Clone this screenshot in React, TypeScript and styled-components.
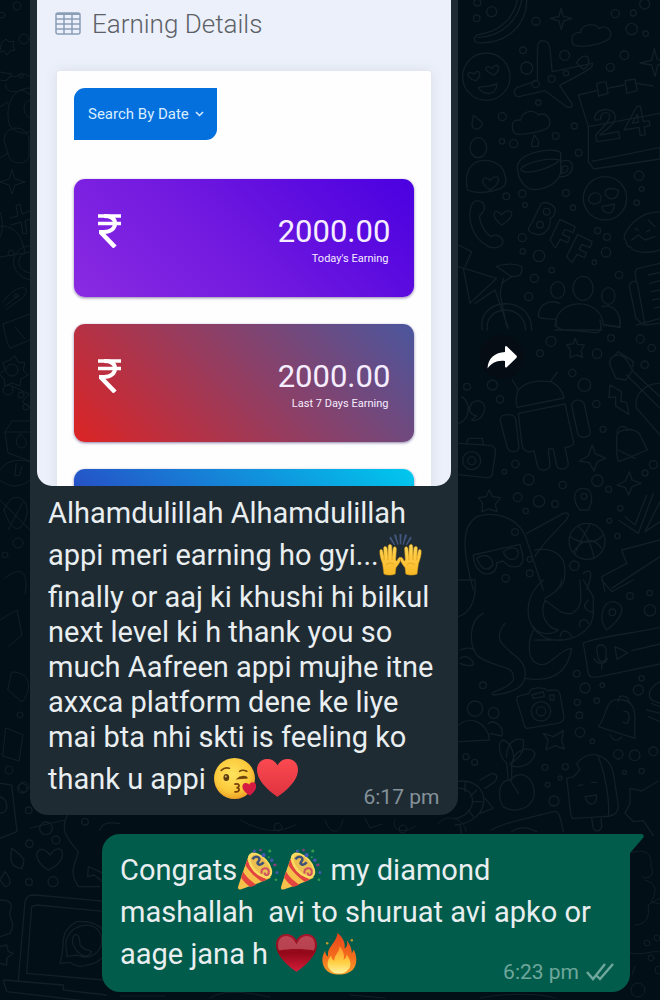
import React from "react";
import styled, { createGlobalStyle } from "styled-components";

const GlobalStyle = createGlobalStyle`
  * { box-sizing: border-box; }
  body {
    margin: 0;
    background: #020f16;
    font-family: Roboto, "Liberation Sans", sans-serif;
  }
`;

const Chat = styled.main`
  position: relative;
  min-height: 100vh;
  overflow: hidden;
  padding-bottom: 8px;
`;

const Backdrop = styled.svg`
  position: absolute;
  top: 0;
  left: 0;
  width: 100%;
  fill: none;
  stroke: #121f27;
  stroke-width: 1;
  stroke-linecap: round;
  stroke-linejoin: round;
`;

const Conversation = styled.div`
  position: relative;
  display: flex;
  flex-direction: column;
  gap: 19px;
  padding: 0 30px;
`;

const MessageRow = styled.div<{ $mine?: boolean }>`
  display: flex;
  align-items: flex-start;
  justify-content: ${(p) => (p.$mine ? "flex-end" : "flex-start")};
  gap: 22px;
`;

const Bubble = styled.article<{ $mine?: boolean }>`
  position: relative;
  display: flex;
  flex-direction: column;
  width: ${(p) => (p.$mine ? "88%" : "71.4%")};
  padding: ${(p) => (p.$mine ? "12px 18px 8px" : "0 7px 6px")};
  background: ${(p) => (p.$mine ? "#025c4b" : "#1f2b33")};
  border-radius: ${(p) => (p.$mine ? "18px 0 18px 18px" : "0 0 18px 18px")};
`;

const Tail = styled.svg`
  position: absolute;
  top: 0;
  left: 100%;
  width: 14px;
  height: 20px;
  fill: #025c4b;
`;

const MessageText = styled.p<{ $inset?: boolean }>`
  margin: 0;
  padding: ${(p) => (p.$inset ? "10px 8px 0 11px" : "0")};
  color: #e9eef0;
  font-size: 29px;
  line-height: 35px;
  white-space: pre-wrap;
`;

const EmojiSvg = styled.svg`
  width: 43px;
  height: 43px;
  margin: 2px 0 4px;
  vertical-align: -15px;
`;

const Meta = styled.span<{ $mine?: boolean }>`
  float: right;
  display: flex;
  align-items: center;
  gap: 7px;
  margin-top: 30px;
  margin-right: ${(p) => (p.$mine ? "-2px" : "4px")};
  color: ${(p) => (p.$mine ? "#6fa79c" : "#84929a")};
  font-size: 21px;
  line-height: 24px;
`;

const Ticks = styled.svg`
  width: 28px;
  height: 18px;
  fill: none;
  stroke: currentColor;
  stroke-width: 2.4;
`;

const ForwardButton = styled.button`
  display: flex;
  align-items: center;
  justify-content: center;
  width: 44px;
  height: 44px;
  margin-top: 335px;
  padding: 0;
  border: 0;
  border-radius: 50%;
  background: #060c14;
  svg { width: 30px; height: 23px; fill: #fff; }
`;

const Attachment = styled.section`
  height: 486px;
  overflow: hidden;
  padding: 0 20px;
  background: #ebf0fa;
  border-radius: 0 0 15px 15px;
`;

const AttachmentHeader = styled.h2`
  display: flex;
  align-items: center;
  gap: 11px;
  height: 71px;
  margin: 0;
  padding: 0 0 24px;
  color: #5d6167;
  font-size: 26px;
  font-weight: 300;
  line-height: 30px;
`;

const GridIcon = styled.svg`
  width: 26px;
  height: 23px;
  margin-left: -2px;
  fill: none;
  stroke: #8a9db9;
`;

const Panel = styled.div`
  display: flex;
  flex-direction: column;
  align-items: flex-start;
  padding: 17px;
  background: #fefeff;
  border-radius: 3px;
  box-shadow: 0 0 12px #d9dbe8;
`;

const SearchButton = styled.button`
  display: flex;
  align-items: center;
  gap: 6px;
  height: 52px;
  margin-bottom: 39px;
  padding: 0 13px 0 14px;
  border: 0;
  border-radius: 11px 0;
  background: #0470de;
  color: #d9edff;
  font-family: inherit;
  font-size: 15px;
  line-height: 20px;
  svg { width: 9px; height: 6px; fill: none; stroke: currentColor; stroke-width: 1.5; }
`;

const EarningCard = styled.div<{ $fill: string }>`
  display: flex;
  align-items: flex-start;
  justify-content: space-between;
  align-self: stretch;
  height: 118px;
  margin-bottom: 27px;
  padding: 35px 24px 0;
  border-radius: 11px;
  background: ${(p) => p.$fill};
  box-shadow: 0 1px 3px #8c80a8;
  color: #f6edff;
`;

const Rupee = styled.svg`
  width: 23px;
  height: 34px;
  fill: none;
  stroke: #fff;
  stroke-width: 4;
`;

const Figures = styled.div`
  display: flex;
  flex-direction: column;
  align-items: flex-end;
`;

const Amount = styled.strong`
  font-size: 31px;
  font-weight: 400;
  line-height: 36px;
`;

const AmountLabel = styled.span`
  padding-right: 2px;
  font-size: 11px;
  line-height: 18px;
`;

type Card = { amount: string; label: string; fill: string };

const cards: Card[] = [
  { amount: "2000.00", label: "Today's Earning", fill: "linear-gradient(45deg, #8a2be2, #7119df 45%, #4a00e0)" },
  { amount: "2000.00", label: "Last 7 Days Earning", fill: "linear-gradient(45deg, #dc2424, #4a569d)" },
  { amount: "", label: "", fill: "linear-gradient(45deg, #2f2cb8, #2456c8 25%, #00c8ee)" },
];

type EmojiProps = { label: string; children: React.ReactNode };
const Emoji = ({ label, children }: EmojiProps) => (
  <EmojiSvg viewBox="0 0 42 42" role="img" aria-label={label}>{children}</EmojiSvg>
);

const heartPath = "M21 39C14 34 1 24 1 12.500C1 6 5.500 2 11 2c4.500 0 8 2.500 10 6C23 4.500 26.500 2 31 2c5.500 0 10 4 10 10.500C41 24 28 34 21 39Z";

const Hand = () => (
  <g>
    <path d="M4.500 36 3.500 29C2 25 .500 20 .800 16.500c.200-2 2.400-2 2.800 0L5 22 4.500 14c0-2.500 3-2.500 3.400 0l.900 7.500.200-9.500c.200-2.500 3.200-2.500 3.500 0l.300 9.500 1-7.500c.500-2.300 3.200-2 3.200.500l-.700 10c0 2 .700 2.300 1.500 1.200l1.300-2.200c1-1.500 2.700-.700 2.300 1C20.500 28.500 18 31 16.500 33l-.700 6c-3 1.500-8 1.500-11 0Z" fill="url(#handFill)" stroke="#d99a16" strokeWidth=".5" />
    <path d="M5 22.500v3M8.800 21.500v4M12.800 21.500v4M7 30c3-2 6-2 8 0" stroke="#e09b18" strokeWidth=".8" fill="none" />
  </g>
);

const RaisedHands = () => (
  <Emoji label="raising hands">
    <g transform="translate(0 1)"><Hand /></g>
    <g transform="translate(42 1) scale(-1 1)"><Hand /></g>
    <path d="M20 1h2l-.300 10h-1.400ZM14.500 2l2-.7 2.600 10-1 .3ZM27.500 2l-2-.7-2.600 10 1 .3ZM10 5 11.500 3.500l4.300 8-.8.600ZM32 5 30.500 3.500l-4.300 8 .8.600Z" fill="#43587f" />
  </Emoji>
);

const KissFace = () => (
  <Emoji label="face blowing a kiss">
    <circle cx="21" cy="21" r="20" fill="url(#faceFill)" />
    <ellipse cx="13" cy="20" rx="2.800" ry="3.500" fill="#5c3b0c" />
    <circle cx="12.500" cy="19" r="1" fill="#d7b875" />
    <path d="M8 13c2-2 5-3 8-2M26 14c2-1.500 5-1 7 0M24.500 21c2-2 6-2.500 9-.5-3-.5-6 0-9 .5Z" fill="none" stroke="#71450c" strokeWidth="1.600" strokeLinecap="round" />
    <path d="M21.500 26.500c5-1 5 3 1.500 3.500 4 .5 3 4.500-1.500 4" fill="none" stroke="#774008" strokeWidth="1.700" strokeLinecap="round" />
    <g transform="translate(28 25) rotate(-5) scale(.34)"><path d={heartPath} fill="#d61b42" /></g>
  </Emoji>
);

const Heart = ({ dark }: { dark?: boolean }) => (
  <Emoji label="red heart">
    <path d={heartPath} fill={dark ? "url(#darkHeart)" : "url(#redHeart)"} />
    {dark && <path d="M3 13C3 7 7 4 11 4c5 0 8 4 10 8 2-4 5-8 10-8 4 0 8 3 8 9 0 2 0 3-1 5-10-2-24-2-34 0-1-2-1-3-1-5Z" fill="#c95f6b" opacity=".65" />}
  </Emoji>
);

const PartyPopper = () => (
  <Emoji label="party popper">
    <path d="M12 6C7 19 4 29 1 38c-.300 2 .700 3 2.500 2.500C13 37 23 34 33 29Z" fill="#f6c14b" />
    <path d="M10 11 8.200 17c5 7 10 12 16 16l5-2C22 27 14 19 10 11ZM6 23l-2 6c3 4 6 7 9 9l6-2C13 32 8 27 6 23Z" fill="#e2443f" />
    <ellipse cx="22.500" cy="17" rx="15" ry="8.500" transform="rotate(48 22.500 17)" fill="#fbdc63" />
    <ellipse cx="23" cy="17" rx="12.500" ry="6.500" transform="rotate(48 23 17)" fill="#ecc050" />
    <path d="M15 11c4-5 9-1 6 2s2 5 5 1" fill="none" stroke="#405279" strokeWidth="2.500" />
    <path d="M24 25c-1-6 7-7 7-2s-4 4-4 1" fill="none" stroke="#cf5362" strokeWidth="2" />
    <g fill="#4558ae"><circle cx="17" cy="3" r="1.500" /><circle cx="26" cy="7" r="2" /><circle cx="34" cy="12" r="1.700" /><circle cx="39" cy="24" r="1.500" /></g>
    <g fill="#329d50"><circle cx="32" cy="3" r="1.500" /><circle cx="38" cy="31" r="1.300" /><circle cx="31" cy="9" r="1" /></g>
    <g fill="#81417f"><circle cx="23" cy="2" r="1.300" /><path d="m35 16 3-1 1 2-3 1Z" /></g>
  </Emoji>
);

const Fire = () => (
  <Emoji label="fire">
    <path d="M12 40C4 36 2 26 7 18c0 3 1 5 3 6C8 15 18 11 19 1c5 4 8 9 7 15 3-2 3-5 2-8 4 5 5 9 5 13l2-4c5 11 2 20-6 23-5 2-12 2-17 0Z" fill="url(#fireOuter)" />
    <path d="M14 39C7 34 9 27 13 23c0 3 1 4 3 5 0-6 5-8 5-14 4 4 5 9 4 13 2-1 3-3 3-5 6 8 4 14-1 17-4 2-9 2-13 0Z" fill="url(#fireInner)" />
    <circle cx="9" cy="11" r="1.200" fill="#c39a2b" /><circle cx="33" cy="8" r="1.200" fill="#c39a2b" />
  </Emoji>
);

const GradientDefs = () => (
  <defs>
    <linearGradient id="handFill" x1="0" y1="0" x2="0" y2="1"><stop offset="0" stopColor="#ffd75a" /><stop offset="1" stopColor="#f8b824" /></linearGradient>
    <radialGradient id="faceFill" cx=".45" cy=".4" r=".6"><stop offset="0" stopColor="#ffe45f" /><stop offset=".7" stopColor="#fbc93c" /><stop offset="1" stopColor="#efa126" /></radialGradient>
    <linearGradient id="redHeart" x1="0" y1="0" x2="0" y2="1"><stop offset="0" stopColor="#fb4a50" /><stop offset="1" stopColor="#df3340" /></linearGradient>
    <linearGradient id="darkHeart" x1="0" y1="0" x2="0" y2="1"><stop offset="0" stopColor="#a3192c" /><stop offset=".5" stopColor="#930819" /><stop offset="1" stopColor="#d51d3a" /></linearGradient>
    <linearGradient id="fireOuter" x1="0" y1="0" x2="0" y2="1"><stop offset="0" stopColor="#e8431c" /><stop offset=".6" stopColor="#f4701d" /><stop offset="1" stopColor="#f9a32b" /></linearGradient>
    <linearGradient id="fireInner" x1="0" y1="0" x2="0" y2="1"><stop offset="0" stopColor="#fb952a" /><stop offset=".6" stopColor="#ffd044" /><stop offset="1" stopColor="#fff3a0" /></linearGradient>
  </defs>
);

type Dot = [number, number, number];
const Dots = ({ items }: { items: Dot[] }) => (
  <>{items.map(([x, y, r]) => <circle key={`${x}-${y}`} cx={x} cy={y} r={r} />)}</>
);

const Doodles = () => (
  <Backdrop viewBox="0 0 660 1000" aria-hidden="true">
    <GradientDefs />
    <g transform="translate(455 0) scale(.33333)" strokeWidth="4">
      <path d="M215 0C215 70 160 135 65 128c-12-5-8-20 5-24C135 95 175 55 187 0M200 0C190 60 140 110 70 112M318 25l7 24 26 6-25 8-7 25-7-25-26-8 26-6ZM352 125c-5-22 12-30 25-27 0-25 45-33 55-12 20-14 40 5 34 22 0 20-80 38-105 28-8-2-10-6-9-11Z" />
      <path d="M250 130c5-12 28-10 32 5 7 23 5 56 10 80l120-25c5 10-6 18-98 66l36 54c4 12-4 15-15 10l-65-48-78 18c-18-2-18-20-5-28l60-20c2-40-3-85 3-112ZM365 190c5-15 20-25 32-20 10 15 2 32-12 38Z" />
      <circle cx="94" cy="230" r="71" /><path d="M62 243c-40-15-20-35-4-20 8-18 30-5 4 20ZM118 225c-40-15-25-35-6-20 12-20 32-5 6 20ZM70 263c20-5 40-3 55-12 2 35-40 38-55 12Z" />
      <path d="M598 145l8 32 24 10-22 8-8 35-10-35-35-6 35-8ZM370 285l55-13M457 265l50-10M545 250l50 8M370 285l30 95v105l16 22 199-30v-35l-204 42M400 380l215-40M425 250l28-5 6 35-28 8ZM510 242l30-5 6 35-30 8Z" />
      <path d="M420 360c-10-30 48-45 60-15 8 25-30 45-45 60l55-10 5 20-70 10-3-20c20-20 45-45 42-58-4-16-30-10-27 12ZM545 320l-38 70 45-8 4 25 15-3-4-23 18-4-3-15-17 3-9-47ZM547 342l3 25-18 2Z" />
      <path d="M55 345c0 15-12 35 5 42 20 0 28-18 15-25ZM172 380c0-22 15-20 25-20 5-32 45-30 52-15 24-10 40 10 34 30 0 18-65 28-93 28-12 0-18-10-18-23ZM230 440c-3-10 5-25 8-35 8 10 18 20 10 35Z" />
      <ellipse cx="70" cy="443" rx="25" ry="30" /><path d="M37 570c-20-110 80-100 105-65 10 20 20 50-5 60-50 18-80 14-100 5ZM105 570c-40-25-15-50 0-28 15-25 50-5 0 28Z" />
      <path d="M187 500c5-45 110-60 130-42v60c-10 45-80 60-100 45-20-15-30-38-30-63ZM317 485c50-20 45 50-3 45M198 510c20 20 110-15 115-30-40-10-120 15-115 30ZM322 500c25-10 22 20-2 20Z" />
      <circle cx="450" cy="595" r="65" /><path d="M400 600c5-30 40-25 38-5 0 20-30 22-38 5ZM450 580c0-20 30-15 40-10 0 30-30 35-40 10ZM440 620l38-8c0 35-30 35-38 8Z" />
      <path d="M50 615c10-20 40-15 38 10 0 12-10 15-15 25 5 30 20 50 35 60 15-10 35 0 36 15-5 25-40 20-50 10-40-20-60-80-44-120ZM140 675c-38-30-20-55 0-30 15-25 60-10 0 30Z" />
      <path d="M230 670l28-58c15-12 48 5 42 25-4 15-15 18-15 18 5 30-20 55-40 48-20-5-35-10-15-33ZM285 720l30-62 45 22-5 18-25-10-8 15 22 10-6 15-22-10-15 26ZM335 770l33-67 43 22-6 18-25-10-8 15 22 10-6 15-22-10-15 25Z" />
      <circle cx="275" cy="635" r="10" /><circle cx="255" cy="674" r="10" />
      <path d="M615 635c-70 0-108 60-108 80 10 5 5 30 20 25 5 20 60 20 88 10M530 720l20-15 20 15 30-10M580 660l20 20M540 685l10 5M575 695l10-5" />
      <path d="M10 800l115 35-80 75-20-105M10 735l40 20-20 45M125 800c20-10 60-10 75 0 5 30-15 30-30 30l-45-30ZM145 835l-10 45 20 100M60 910l60-40 40 115M170 830l-30 20" />
      <path d="M82 990c-20-100 150-110 148 0M97 990c-10-75 110-85 115 0M300 980c0-90 140-90 145-5M300 990h140" /><ellipse cx="308" cy="870" rx="21" ry="25" /><ellipse cx="384" cy="865" rx="30" ry="36" /><ellipse cx="460" cy="888" rx="20" ry="25" />
      <path d="M315 910c-40-15-65 10-65 40 15 10 35 5 50 8M440 920c30-10 60 15 55 60l-50-5M615 790l-65 15c-15 5-10 20 0 60l20 110 45-5M545 845c-20-5-25 10-20 25l18 85 22 20M580 825l35-8M584 850l31-8M588 875l27-5M593 900l22-5M598 925l17-5" />
      <Dots items={[[67,8,10],[110,35,15],[65,55,10],[243,64,12],[481,41,12],[535,39,9],[530,87,17],[572,101,8],[569,12,15],[204,151,10],[215,204,18],[329,166,15],[242,252,11],[290,237,10],[333,220,8],[466,202,12],[508,166,13],[250,308,8],[142,350,12],[358,378,9],[302,408,10],[176,431,12],[141,424,8],[371,458,10],[154,589,10],[202,581,11],[333,579,10],[210,615,7],[354,623,8],[552,527,14],[560,567,7],[545,608,8],[202,713,12],[203,754,8],[252,768,17],[428,692,9],[456,711,10],[453,757,14],[492,825,11],[418,787,7],[238,835,12],[290,811,8],[221,890,12]]} />
    </g>
    <g transform="translate(455 320) scale(.33333)" strokeWidth="4">
      <path d="M305 0c-5 15 0 25 15 28l100 10c20 0 20-15 15-38M450 15l45 8V0M545 15l70-20M360 55l8 18 20 2-10 18 5 18-20-6-18 8 2-22-12-16 20-4Z" />
      <path d="M187 262l140-28c-5-25-20-40-40-50l20-28M172 180l18 30c-8 20-10 35-3 52M190 210c20-25 60-30 95-25M190 280l140-28 25 110c5 12-8 20-25 20l10 50c-3 18-28 20-35 5l-10-50h-15l5 50c-8 20-35 15-38 0l-10-45c-25 10-35-5-37-25ZM135 300c0-20 42-22 47-2l10 85c-5 18-30 15-35 0ZM350 255c5-18 30-20 38-2l18 85c-5 18-30 18-38 3Z" />
      <path d="M20 230c30 20 25 70-10 80M50 250c25-20 50 5 35 30-5 15-20 25-35 20l15-12c-25-5-25-25-15-38ZM13 370l90 6c15 0 20 10 18 25l-10 65c-3 8-12 8-22 6l-80-8M35 370l5-15h42l3 20" /><circle cx="50" cy="422" r="27" /><circle cx="50" cy="422" r="12" />
      <path d="M412 375l8 25 32 15-25 10-10 28-14-25-30-5 26-15ZM523 455l8 25 27 10-27 10-10 25-10-22-25-8 25-12ZM465 195l35 20-3 28 18 5 7 35-40-25v-28l-20 3ZM485 350c-2-25 60-30 70-5l22 45-85 35c-8-3-7-40-7-75ZM487 342c-5-25 30-30 30-10M490 390l50 25" />
      <path d="M465 135c-5-30 30-40 50-15l18 30-20 30-30-5ZM480 105l10-10 45 30-2 15M515 165l100 100M530 150l85 80M615 190c-50 0-80 40-70 75l70 80M103 510l10 20 23 3-15 20 5 22-25-8-20 8 2-25-13-17 23-3ZM375 570c-25-30-20-65 10-65s30 40 15 65Z" />
      <path d="M55 810C20 680 20 620 65 590c60-20 120 5 145 55l55 165M55 705l140-32 5 20c20 60-40 55-55 30l-20 5c5 45-60 50-70-15ZM65 715c30-20 50 0 48 20-15 20-35 15-48-20ZM145 695c25-20 45-10 45 5-5 25-35 25-45-5ZM215 640l110-60c15-5 20 3 10 18l-65 70-30 40M240 690c60-10 90 20 90 60s-10 50-25 60" />
      <circle cx="396" cy="664" r="54" /><path d="M370 620c25 20 40 60 48 95M345 650c35 25 80 20 100-5M355 695c30-40 60-45 85-10M405 612c-15 30-40 70-45 90M490 600l60 40 45-120M510 590l30 25 35-90M615 545l-45 90 45-30M500 690l115-30M500 690l15 40-75 40 10 45M470 805l145-95M385 760c30-20 25 10 10 50" />
      <Dots items={[[288,64,15],[255,100,10],[426,101,14],[468,54,10],[556,57,12],[590,84,11],[569,134,11],[352,159,11],[388,195,19],[424,252,11],[135,238,11],[36,200,10],[112,195,15],[444,328,9],[181,432,11],[148,455,7],[221,479,16],[323,495,11],[427,482,17],[461,508,9],[188,532,13],[252,544,17],[300,552,10],[212,573,8],[387,529,9],[570,459,9],[595,434,12],[496,565,8],[463,602,7],[487,648,8],[180,636,10],[358,737,14],[152,775,11],[224,718,8],[224,760,10]]} />
    </g>
    <g transform="translate(455 580) scale(.33333)" strokeWidth="4">
      <path d="M10 0h50c5 60-15 100-50 110M85 100C40 120 40 200 70 230c60 40 110 20 105 70-15 30-80 35-60 45 50-5 95-20 95-60 5-45-40-60-60-85-25-20-20-45 0-70M15 210c25-10 35-5 45 0M15 235c10-10 40-5 40 20-20 5-30 0-40-5" />
      <path d="M265 0c-60 50-65 140 10 175 70 20 140-20 140-80V50L385 0M270 60c40 30 50 45 80 40 40-20 25-60 25-100M270 60c-20 50 10 85 40 90-25 20-65 10-75-10M235 150c-20 40-15 90 10 100 40 20 60-40 105-45-15 90-80 100-140 90M320 0c-5 30-25 40-50 55M400 60c-30 25 10 40 15 35M375 140c-10-20 20-30 25-10M315 170c5-25 25-20 35 0M240 180l80 0" />
      <path d="M385 190c15-15 150-30 230-48M385 190l15 90c3 15 15 12 35 10l180-38M425 210c0-20 25-20 28 0v25c-5 15-20 12-23 0ZM417 235c10 20 35 20 40 0M440 250v18M480 200l38 18-32 20ZM530 212l85-20M455 150c-25-30-15-85 20-85 45 10 25 50-20 85ZM440 0l30 35 65-35" />
      <circle cx="472" cy="97" r="10" />
      <path d="M187 350l35-10c0-20 45-20 55-8 30-5 35 0 38 10l12 70c0 12-10 15-20 18l-90 15c-10 0-10-10-12-20l-20-65ZM230 345l35-10 3 15-33 5ZM285 345h12v15h-12Z" /><circle cx="258" cy="394" r="29" /><circle cx="258" cy="394" r="14" />
      <path d="M430 440c35-45 15-90 75-80 50 10 30 70 35 115ZM430 440l110 35M490 365c-5-25 32-20 32 0M465 465c15 25 25 15 35 7M507 395c15-5 20 15 10 35l-12-3M265 460l30 10 30-18-5 30 8 25-28-10-27 13 6-30Z" />
      <circle cx="60" cy="386" r="23" /><circle cx="116" cy="399" r="16" /><path d="M12 435c30-30 85-10 92 45l-92 5M100 430c25-15 50 20 40 38l-35-8M155 550c-30-30-25-70-10-70 15 5 35 30 30 60M155 530c0-40 25-60 50-50 5 40-20 60-40 70M170 555c5-50 60-60 70-35-5 30-45 50-75 35M155 550l5 50M170 550v50M165 600c-40 0-35 60-20 80 30 20 80 10 92-30 5-60-40-85-72-50l25 40" />
      <path d="M355 590l20-20-10-20c45-50 100-20 110 30l15 95c0 30-20 35-50 35l-85 5c-10 0-8-25-20-120ZM430 530c20 50 35 130 30 180M410 715l5 30c5 12 20 10 25-5l-2-25M370 617l13-3M410 607h15M390 650l35-5c0 35-25 35-35 5Z" />
      <path d="M0 605c110-20 120 120 0 130M0 625c70-10 70 80 0 90M75 600l35-20c15 0 20 10 10 25l-30 20M90 655l25 30-40 15M30 605v30M65 630l-20 20M80 665H55M55 710 40 690M15 735l5 30M110 750c20-20 130-40 185-55 20-5 20 20 30 60M170 755c20-15 45-15 75 0M615 305c-30 15-40 40-25 55l25 10M590 370l25 10M575 390l40 10M580 410l35 15M525 625l35 8 50-30M525 625v45l-15 30 25 25 30-3 30 45" />
      <Dots items={[[525,48,10],[584,39,8],[585,91,17],[365,281,10],[390,324,15],[442,316,7],[550,330,15],[560,295,8],[425,362,8],[367,367,9],[373,406,10],[375,457,14],[84,316,10],[33,530,9],[59,547,9],[270,562,9],[331,560,9],[315,594,6],[278,614,7],[297,663,15],[490,523,14],[539,526,16],[595,514,13],[560,573,8],[508,577,6],[412,484,7]]} />
    </g>
    <g transform="translate(0 780) scale(.33333)" strokeWidth="4">
      <path d="M0 10l35 5 16 140-51 20M0 50c25 10 30 45 0 50M35 205c-5 30-5 60 30 60 10-20 15-30-30-60ZM0 300l15-25c20 25 20 40 0 45ZM145 270c-60-35-30-90 5-45 35-50 65 15-5 45ZM205 100c-30 50 0 80 30 115-10 40-30 60 0 105h65M265 260l-2 30 20-5 25 20M265 260l45 20M300 150c10-30 40-20 60-20" />
      <path d="M55 600l20-235c5-20 15-20 30-20l220 20M80 580l15-200 15-5 210 20M80 580l230 20M10 600l180 15v15l130 15M10 600l10 35 300 35M180 550c20-60-10-90 50-125 120-10 120 120 30 130-25 10-40 0-50-8ZM200 530c5-20-20-50 25-85 80-40 110 60 45 85-25 5-35-5-40-5ZM220 470c15-20 20 10 20 25 15 20 25 10 35 20-20 40-70-20-55-45ZM0 360c30 0 40 10 30 35-5 20 20 35 0 65l-30 10M0 500l20-5 5 20 15 5-20 15v20L0 550" />
      <Dots items={[[67,25,14],[86,91,10],[138,145,19],[168,180,12],[88,191,11],[255,125,10],[87,306,10],[159,305,15]]} />
    </g>
    <g>
      <path d="M2 42l4-3 3 3 5-1-1 5 2 4-5 1-3 4-3-4-4 1ZM7 80c3-6 8-3 9-3 5-6 12-2 14 0M6 84c-2 10 12 8 17 6l8 5M0 72l12 2-6 7-6-1M30 88c-22 0-25 25-20 38 5 6 15 10 20 5M30 100c-9 2-7 16 0 18M0 107l8-5M4 140c0-16 24-16 25 0v17c-4 10-18 6-20 0ZM0 158l8-5M12 170l3 9 10 3-10 3-3 9-3-9-9-3 9-3ZM10 218l8-2-2-10 4-2 2 10 8-3M11 225l10-3 2 12 4-1-2-12 5-2M0 226c16 0 22 10 25 27l-25 4M0 212c4 10 3 25-3 30" />
      <path d="M30 246c-20 0-24 28 0 34M30 252c-14 0-16 18 0 21M3 302c8-12 20-17 23-13 2 9-13 14-19 20M5 306l14-11M3 324c2 10 4 20 7 24l20-8M3 324l27-10M15 327l10 12M10 360l5-4 3 6 7 1-2 7 5 5-7 4-1 7-8-3-7 3-1-7-5-5 6-4-2-7ZM12 386l17 8-7 8 8 5M5 432l7-11h18M5 432l3 21 22 8M5 432h25M20 434c-7 8-3 14 2 14 8-3 4-10-2-14ZM0 470c6-10 20-12 30-8M0 480c10 8 20 8 30 0M16 464l-1 12 5-1 2-9M4 510c10-24 25-10 23 4-5 20-15 20-23-4ZM8 530l15-28M0 500l30 30M5 578c18-15 24-2 20 16M0 620l17-10 5 25-14 12M12 672c20 0 20 18 10 30L8 690ZM6 728l17 7-4 26-16-5Z" />
      <circle cx="12" cy="370" r="6" />
      <Dots items={[[17,6,4],[24,39,5],[2,15,3],[21,76,2],[16,296,2],[11,253,3],[26,407,3],[8,390,5],[21,395,3],[18,543,5],[5,555,3],[20,715,3],[9,770,4],[24,787,5]]} />
    </g>
    <path d="M30 828l35-8M240 820c20 10 35 15 55 5M325 820c5 15 15 15 18 0M365 818l5 10 12-4M395 820c-5 10 10 15 20 6M438 824c8-12 28-5 28 8M120 996h45M210 998c15-10 40-5 60-1M350 995l35 3M480 998c25-5 60-5 75 0" />
    <path d="M630 853c15-5 22 0 21 13 5 10-5 15-9 10M645 880c15 5 10 15 6 22l9 2M635 925c12 0 15-10 13-20l12-7M630 953c15 3 20-3 30-1M632 975l3-9" />
    <Dots items={[[647,943,3],[657,938,3],[651,958,3],[638,990,7],[659,970,4],[278,827,4],[403,829,4]]} />
  </Backdrop>
);

export default function App() {
  return (
    <Chat>
      <GlobalStyle />
      <Doodles />
      <Conversation>
        <MessageRow>
          <Bubble>
            <Attachment>
              <AttachmentHeader>
                <GridIcon viewBox="0 0 26 23" aria-hidden="true">
                  <rect x="1" y="1" width="24" height="21" rx="2" strokeWidth="1.500" />
                  <path d="M1 2h24" strokeWidth="2" /><path d="M1 7h24M1 12h24M1 17h24M9 1v21M17 1v21" strokeWidth="1.500" />
                </GridIcon>
                Earning Details
              </AttachmentHeader>
              <Panel>
                <SearchButton type="button">
                  Search By Date
                  <svg viewBox="0 0 9 6" aria-hidden="true"><path d="m1 1 3.500 3.500L8 1" /></svg>
                </SearchButton>
                {cards.map((card, i) => (
                  <EarningCard key={i} $fill={card.fill}>
                    {card.amount && (
                      <>
                        <Rupee viewBox="0 0 23 34" role="img" aria-label="Rupees">
                          <path d="M0 2h23M0 9.500h23" strokeWidth="3.500" />
                          <path d="M6 2c8 0 11 3 11 7.500S13 18 6 18H1" />
                          <path d="M2.500 18 17 33" strokeWidth="4.500" />
                        </Rupee>
                        <Figures>
                          <Amount>{card.amount}</Amount>
                          <AmountLabel>{card.label}</AmountLabel>
                        </Figures>
                      </>
                    )}
                  </EarningCard>
                ))}
              </Panel>
            </Attachment>
            <MessageText $inset>
              Alhamdulillah Alhamdulillah appi meri earning ho gyi...<RaisedHands /> finally or aaj ki khushi hi bilkul next level ki h thank you so much Aafreen appi mujhe itne axxca platform dene ke liye mai bta nhi skti is feeling ko thank u appi <KissFace /><Heart />
              <Meta><time>6:17 pm</time></Meta>
            </MessageText>
          </Bubble>
          <ForwardButton type="button" aria-label="Forward">
            <svg viewBox="0 0 30 23" aria-hidden="true"><path d="M18 1.500c0-1.500 1-2 2-1l9.300 9c.8.800.8 1.600 0 2.400L20 21c-1 1-2 .500-2-1v-5C10 14 4.500 17 .500 22.500 1 12 8 6.500 18 6Z" /></svg>
          </ForwardButton>
        </MessageRow>
        <MessageRow $mine>
          <Bubble $mine>
            <Tail viewBox="0 0 14 20" aria-hidden="true"><path d="M-1 0H11c2.500 0 3.500 2 2 4L0 19H-1Z" /></Tail>
            <MessageText>
              Congrats<PartyPopper /><PartyPopper /> my diamond mashallah  avi to shuruat avi apko or aage jana h <Heart dark /><Fire />
              <Meta $mine>
                <time>6:23 pm</time>
                <Ticks viewBox="0 0 28 18" role="img" aria-label="Delivered"><path d="m1 9 6 7L19 1M11 13l3 3L27 1" /></Ticks>
              </Meta>
            </MessageText>
          </Bubble>
        </MessageRow>
      </Conversation>
    </Chat>
  );
}
